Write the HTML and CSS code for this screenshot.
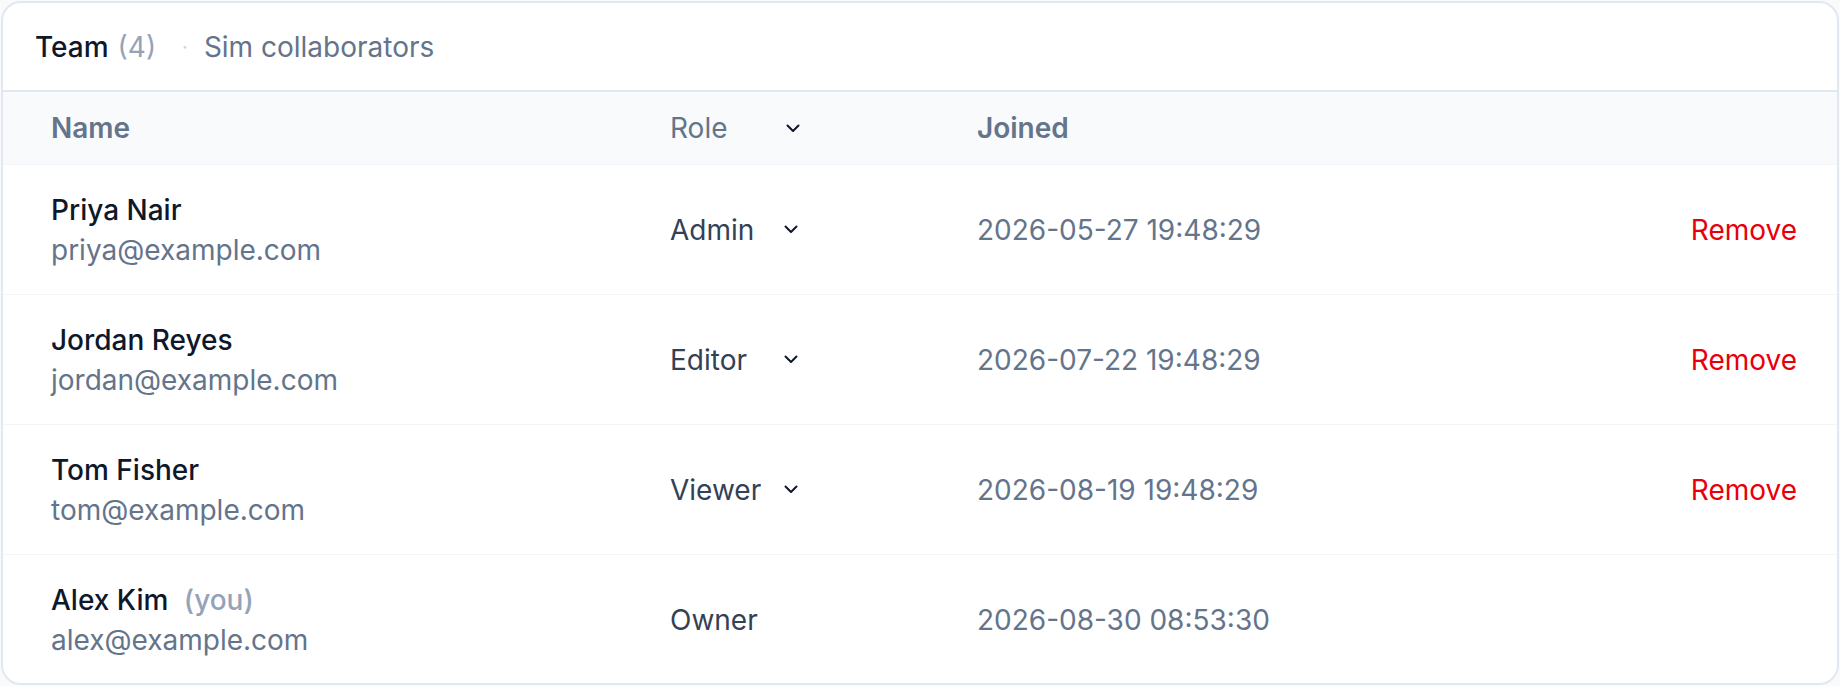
FILE: index.html
```html
<!DOCTYPE html>
<html lang="en">
<head>
  <meta charset="UTF-8" />
  <meta name="viewport" content="width=device-width, initial-scale=1.0"/>
  <title>Team</title>
  <link rel="stylesheet" href="styles.css">
</head>
<body>
  <div class="card">
    <div class="card-head">
      <span class="title">Team</span>
      <span class="count">(4)</span>
      <span class="dot">·</span>
      <span class="subtitle">Sim collaborators</span>
    </div>

    <div class="row head-row">
      <div class="col-name th">Name</div>
      <div class="col-role">
        <div class="role-select th-light">
          Role
          <svg class="chev" width="14" height="9" viewBox="0 0 14 9"><polyline points="1.5,1.5 7,7 12.5,1.5"/></svg>
        </div>
      </div>
      <div class="col-joined th">Joined</div>
      <div class="col-action"></div>
    </div>

    <div class="row">
      <div class="col-name">
        <div class="name">Priya Nair</div>
        <div class="email">priya@example.com</div>
      </div>
      <div class="col-role">
        <div class="role-select">
          Admin
          <svg class="chev" width="14" height="9" viewBox="0 0 14 9"><polyline points="1.5,1.5 7,7 12.5,1.5"/></svg>
        </div>
      </div>
      <div class="col-joined date">2026-05-27 19:48:29</div>
      <div class="col-action"><button class="btn-remove">Remove</button></div>
    </div>

    <div class="row">
      <div class="col-name">
        <div class="name">Jordan Reyes</div>
        <div class="email">jordan@example.com</div>
      </div>
      <div class="col-role">
        <div class="role-select">
          Editor
          <svg class="chev" width="14" height="9" viewBox="0 0 14 9"><polyline points="1.5,1.5 7,7 12.5,1.5"/></svg>
        </div>
      </div>
      <div class="col-joined date">2026-07-22 19:48:29</div>
      <div class="col-action"><button class="btn-remove">Remove</button></div>
    </div>

    <div class="row">
      <div class="col-name">
        <div class="name">Tom Fisher</div>
        <div class="email">tom@example.com</div>
      </div>
      <div class="col-role">
        <div class="role-select">
          Viewer
          <svg class="chev" width="14" height="9" viewBox="0 0 14 9"><polyline points="1.5,1.5 7,7 12.5,1.5"/></svg>
        </div>
      </div>
      <div class="col-joined date">2026-08-19 19:48:29</div>
      <div class="col-action"><button class="btn-remove">Remove</button></div>
    </div>

    <div class="row last">
      <div class="col-name">
        <div class="name">Alex Kim <span class="you">(you)</span></div>
        <div class="email">alex@example.com</div>
      </div>
      <div class="col-role">
        <div class="role-plain">Owner</div>
      </div>
      <div class="col-joined date">2026-08-30 08:53:30</div>
      <div class="col-action"></div>
    </div>
  </div>
</body>
</html>
```

FILE: styles.css
```css
body {
  margin: 0;
  padding: 1px;
  background: #f8fafc;
  font-family: Inter, "Noto Sans", sans-serif;
  font-size: 28px;
}

.card {
  height: 680px;
  background: white;
  border: 2px solid #e2e8f0;
  border-radius: 20px;
  overflow: hidden;
}

.card-head {
  display: flex;
  align-items: center;
  height: 87px;
  padding-left: 32px;
  border-bottom: 2px solid #e2e8f0;
}

.title { color: #0f172a; font-weight: 500; }
.count { color: #94a3b8; margin-left: 9px; }
.dot { color: #cbd5e1; margin-left: 26px; font-size: 20px; }
.subtitle { color: #64748b; margin-left: 16px; }

.row {
  display: grid;
  grid-template-columns: 619px 307px 1fr auto;
  align-items: center;
  height: 129px;
  padding: 0 40px 0 48px;
  border-bottom: 1px solid #f1f5f9;
}

.row.last { border-bottom: none; }

.head-row {
  height: 72px;
  background: #f8fafc;
}

.th { color: #64748b; font-weight: 600; }
.th-light { color: #64748b; }

.name { color: #0f172a; font-weight: 500; line-height: 40px; }
.email { color: #64748b; line-height: 40px; }
.you { color: #94a3b8; margin-left: 8px; }

.role-select {
  display: flex;
  align-items: center;
  justify-content: space-between;
  width: 128px;
  color: #334155;
}

.head-row .role-select { color: #64748b; width: 130px; }

.role-plain { color: #334155; }

.chev {
  fill: none;
  stroke: #0f172a;
  stroke-width: 2;
  stroke-linecap: round;
  stroke-linejoin: round;
}

.date { color: #64748b; }

.btn-remove {
  font-family: inherit;
  font-size: 28px;
  color: #e7000b;
  background: none;
  border: none;
  padding: 0;
  cursor: pointer;
}
```
